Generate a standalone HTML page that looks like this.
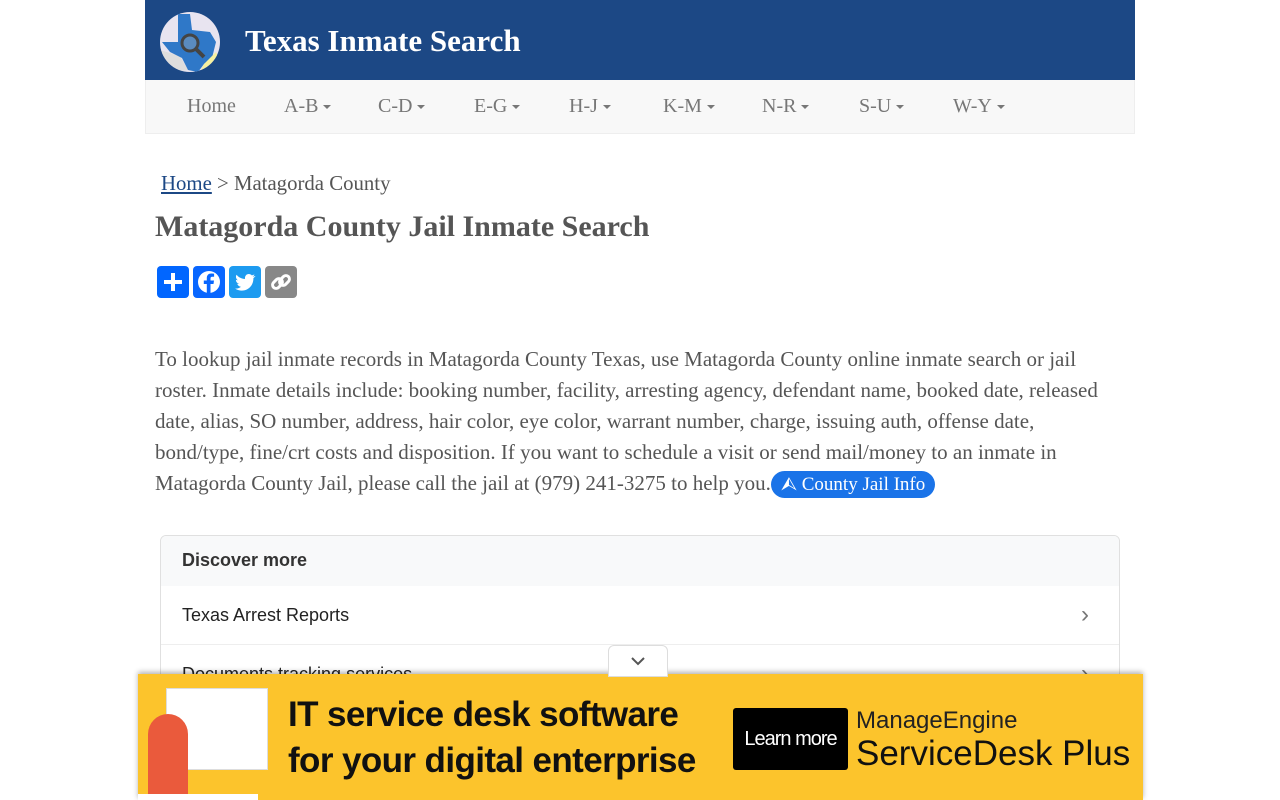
<!DOCTYPE html>
<html><head><meta charset="utf-8"><style>
body{margin:0;background:#fff;font-family:"Liberation Serif",serif;color:#555;}
.wrap{position:absolute;left:145px;top:0;width:990px;}
.hdr{height:80px;background:#1c4885;position:relative;}
.logo{position:absolute;left:15px;top:12px;width:60px;height:60px;border-radius:50%;background:#e8e4f0;overflow:hidden;}
.title{position:absolute;left:100px;top:23px;color:#fff;font-weight:bold;font-size:31px;}
.nav{height:53px;background:#f8f8f8;border:1px solid #eee;border-top:0;position:relative;}
.nav span{position:absolute;top:15px;font-size:20px;color:#777;}
.car{display:inline-block;width:0;height:0;border-left:4px solid transparent;border-right:4px solid transparent;border-top:4px solid #777;vertical-align:middle;margin-left:5px;}
.bc{position:absolute;left:16px;top:172px;font-size:20.8px;color:#555;}
.bc a{color:#1c4885;text-decoration:underline;}
h1{position:absolute;left:10px;top:210px;margin:0;font-size:30px;color:#555;}
.share{position:absolute;left:12px;top:266px;}
.share div{position:absolute;top:0;width:32px;height:32px;border-radius:4px;}
.p{position:absolute;left:10px;top:344px;width:965px;font-size:21px;line-height:31px;color:#555;}
.btn{display:inline-block;background:#1a73e8;color:#fff;border-radius:14px;padding:0 10px 0 10px;line-height:27px;font-size:19px;}
.disc{position:absolute;left:15px;top:535px;width:958px;height:150px;border:1px solid #e0e0e0;border-radius:6px;font-family:"Liberation Sans",sans-serif;overflow:hidden;}
.ad{position:absolute;left:138px;top:674px;width:1005px;height:126px;background:#fcc42c;font-family:"Liberation Sans",sans-serif;box-shadow:0 -2px 5px rgba(0,0,0,.3);}
</style></head><body>
<div class="wrap">
<div class="hdr">
 <div class="logo"><svg width="60" height="60"><path d="M0 38 L20 44 L28 58 L10 60 L0 60Z" fill="#ddd"/><path d="M18 2 L30 2 L32 18 L50 20 L56 30 L52 46 L44 52 L38 60 L28 58 L22 46 L10 40 L2 30 L18 30Z" fill="#2f78c8"/><path d="M44 52 L56 40 L60 50 L50 60 L40 60Z" fill="#f6f0a0"/><circle cx="30" cy="31" r="8" fill="#5a8bbf" stroke="#444" stroke-width="3"/><path d="M36 37 L44 45" stroke="#444" stroke-width="4"/></svg></div>
 <div class="title">Texas Inmate Search</div>
</div>
<div class="nav">
 <span style="left:41px">Home</span>
 <span style="left:138px">A-B<i class="car"></i></span>
 <span style="left:232px">C-D<i class="car"></i></span>
 <span style="left:328px">E-G<i class="car"></i></span>
 <span style="left:423px">H-J<i class="car"></i></span>
 <span style="left:517px">K-M<i class="car"></i></span>
 <span style="left:616px">N-R<i class="car"></i></span>
 <span style="left:713px">S-U<i class="car"></i></span>
 <span style="left:807px">W-Y<i class="car"></i></span>
</div>
<div class="bc"><a>Home</a> &gt; Matagorda County</div>
<h1>Matagorda County Jail Inmate Search</h1>
<div class="share">
 <div style="left:0;background:#0166ff"><svg width="32" height="32"><path d="M16 7v18M7 16h18" stroke="#fff" stroke-width="4"/></svg></div>
 <div style="left:36px;background:#0866ff"><svg width="32" height="32"><circle cx="16" cy="16" r="11" fill="#fff"/><path d="M17.5 28V18h3l.5-3.5h-3.5v-2c0-1 .4-1.7 1.8-1.7h1.8V7.7c-.4 0-1.5-.2-2.8-.2-2.7 0-4.5 1.6-4.5 4.6v2.4h-3V18h3v10z" fill="#0866ff"/></svg></div>
 <div style="left:72px;background:#1d9bf0"><svg width="32" height="32"><path d="M26 10c-.8.4-1.6.6-2.4.7.9-.5 1.5-1.3 1.8-2.3-.8.5-1.7.8-2.6 1-1.6-1.8-4.5-1.8-6 .1-.8 1-1 2.3-.8 3.5-3.3-.2-6.4-1.7-8.5-4.3-1.1 1.9-.5 4.3 1.3 5.5-.7 0-1.3-.2-1.9-.5 0 2 1.4 3.7 3.3 4.1-.6.2-1.2.2-1.9.1.5 1.7 2.1 2.8 3.8 2.9-1.7 1.3-3.8 2-6 1.800 8.5 5.3 18.5-.4 18.3-10.5.8-.6 1.5-1.3 2.1-2.1z" fill="#fff"/></svg></div>
 <div style="left:108px;background:#888"><svg width="32" height="32"><g stroke="#fff" stroke-width="3" fill="none"><rect x="7" y="14" width="11" height="7" rx="3.5" transform="rotate(-45 12.5 17.5)"/><rect x="14" y="11" width="11" height="7" rx="3.5" transform="rotate(-45 19.5 14.5)"/></g></svg></div>
</div>
<div class="p">To lookup jail inmate records in Matagorda County Texas, use Matagorda County online inmate search or jail roster. Inmate details include: booking number, facility, arresting agency, defendant name, booked date, released date, alias, SO number, address, hair color, eye color, warrant number, charge, issuing auth, offense date, bond/type, fine/crt costs and disposition. If you want to schedule a visit or send mail/money to an inmate in Matagorda County Jail, please call the jail at (979)&nbsp;241-3275 to help you.<span class="btn">&#x2B99; County Jail Info</span></div>
<div class="disc">
 <div style="height:50px;background:#f8f9fa;padding-left:21px;line-height:48px;font-size:18px;font-weight:bold;color:#333">Discover more</div>
 <div style="height:58px;border-bottom:1px solid #eee;padding-left:21px;line-height:58px;font-size:18px;color:#222;position:relative">Texas Arrest Reports<span style="position:absolute;right:30px;color:#777;font-size:24px">›</span></div>
 <div style="padding-left:21px;line-height:58px;font-size:18px;color:#222;position:relative">Documents tracking services<span style="position:absolute;right:30px;color:#777;font-size:24px">›</span></div>
</div>
<div style="position:absolute;left:463px;top:645px;width:58px;height:30px;background:#fff;border:1px solid #ddd;border-radius:6px 6px 0 0;text-align:center;z-index:2"><svg width="20" height="20" style="margin-top:6px"><path d="M4 6l6 6 6-6" stroke="#555" stroke-width="2" fill="none"/></svg></div>
</div>
<div class="ad">
 <div style="position:absolute;left:28px;top:14px;width:100px;height:80px;background:#fff;border:1px solid #ddd"></div>
 <div style="position:absolute;left:10px;top:40px;width:40px;height:80px;background:#ea5a3c;border-radius:20px 20px 0 0"></div>
 <div style="position:absolute;left:0;top:120px;width:120px;height:6px;background:#fff"></div>
 <div style="position:absolute;left:150px;top:18px;font-size:35px;font-weight:bold;color:#111;line-height:46px;letter-spacing:-0.6px">IT service desk software<br>for your digital enterprise</div>
 <div style="position:absolute;left:595px;top:34px;width:115px;height:62px;background:#000;color:#fff;font-size:20px;line-height:62px;text-align:center;border-radius:3px;letter-spacing:-1px">Learn more</div>
 <div style="position:absolute;left:718px;top:33px;font-size:24px;color:#222">ManageEngine</div>
 <div style="position:absolute;left:718px;top:60px;font-size:35px;color:#111;letter-spacing:0">ServiceDesk Plus</div>
</div>
</body></html>
